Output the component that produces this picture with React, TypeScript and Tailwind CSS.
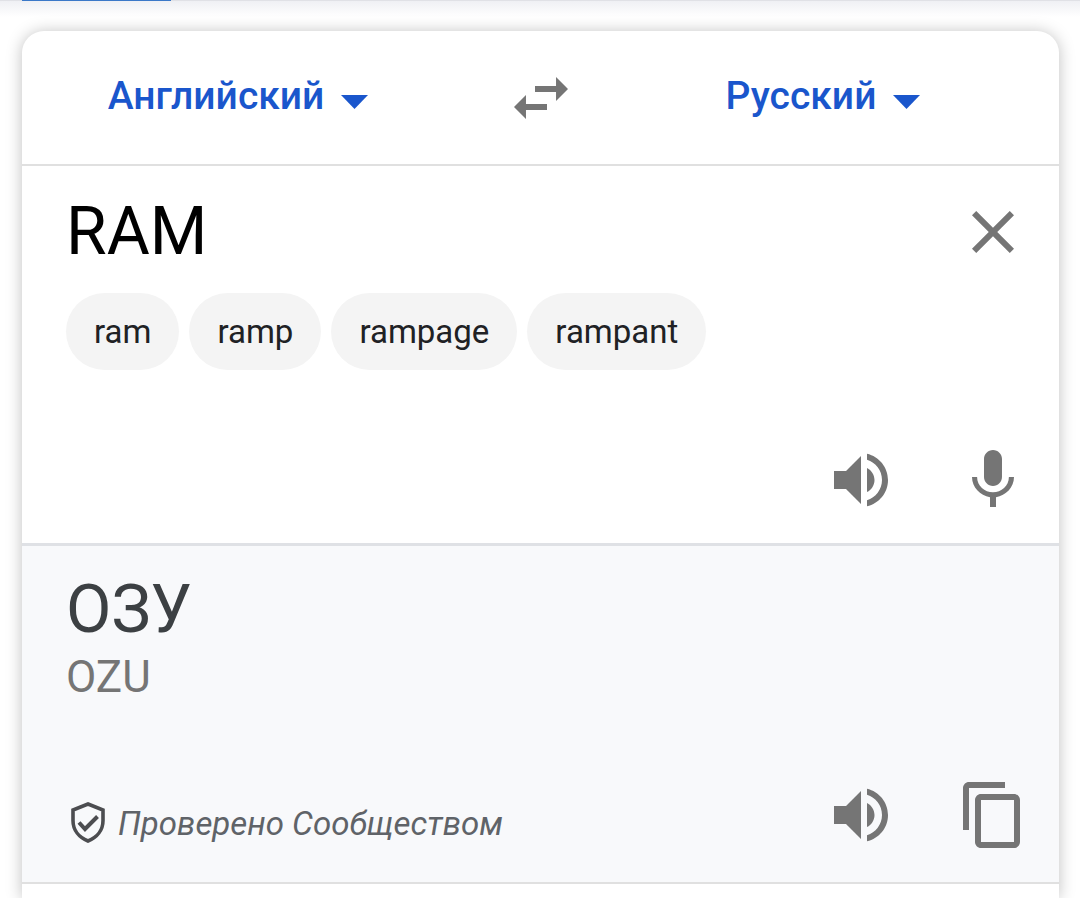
import React from 'react';

const SUGGESTIONS = ['ram', 'ramp', 'rampage', 'rampant'];

const ICONS = {
  swap: 'M6.99 11L3 15l3.99 4v-3H14v-2H6.99v-3zM21 9l-3.99-4v3H10v2h7.01v3L21 9z',
  close: 'M19 6.41L17.59 5 12 10.59 6.41 5 5 6.41 10.59 12 5 17.59 6.41 19 12 13.41 17.59 19 19 17.59 13.41 12z',
  speaker:
    'M3 9v6h4l5 5V4L7 9H3zm13.5 3c0-1.77-1.02-3.29-2.5-4.03v8.05c1.48-.73 2.5-2.25 2.5-4.02zM14 3.23v2.06c2.89.86 5 3.54 5 6.71s-2.11 5.85-5 6.71v2.06c4.01-.91 7-4.49 7-8.77s-2.99-7.86-7-8.77z',
  mic: 'M12 14c1.66 0 2.99-1.34 2.99-3L15 5c0-1.66-1.34-3-3-3S9 3.34 9 5v6c0 1.66 1.34 3 3 3zm5.3-3c0 3-2.54 5.1-5.3 5.1S6.7 14 6.7 11H5c0 3.41 2.72 6.23 6 6.72V21h2v-3.28c3.28-.48 6-3.3 6-6.72h-1.7z',
  copy: 'M16 1H4c-1.1 0-2 .9-2 2v14h2V3h12V1zm3 4H8c-1.1 0-2 .9-2 2v14c0 1.1.9 2 2 2h11c1.1 0 2-.9 2-2V7c0-1.1-.9-2-2-2zm0 16H8V7h11v14z',
};

function IconButton({ icon, label }: { icon: keyof typeof ICONS; label: string }) {
  return (
    <button type="button" aria-label={label} className="shrink-0 text-[#757575]">
      <svg viewBox="0 0 24 24" className="size-[72px]" fill="currentColor" aria-hidden="true">
        <path d={ICONS[icon]} />
      </svg>
    </button>
  );
}

function LanguageSelect({ label, value, options }: { label: string; value: string; options: string[] }) {
  return (
    <div className="flex flex-1 items-center justify-center pr-5 pb-1 text-[#1a56cc]">
      <select
        aria-label={label}
        defaultValue={value}
        className="h-16 appearance-none bg-transparent pr-2 text-[39px] leading-[52px] font-medium outline-none [field-sizing:content]"
      >
        {options.map((option) => (
          <option key={option}>{option}</option>
        ))}
      </select>
      <svg viewBox="0 0 27 14" className="mt-3 ml-[9px] h-[14px] w-[27px]" fill="currentColor" aria-hidden="true">
        <path d="M0 0h27L13.5 14z" />
      </svg>
    </div>
  );
}

export default function App() {
  return (
    <div className="flex min-h-screen flex-col overflow-hidden bg-white font-[Roboto,sans-serif]">
      {/* Bottom edge of the tab strip and its shadow */}
      <div className="h-px bg-[#e0e1e6] pl-[22px]">
        <div className="h-px w-[149px] bg-[#3b78c8]" />
      </div>
      <div className="h-4 bg-linear-to-b from-[#eff0f4] to-white" />

      <div className="mt-[14px] mr-[21px] ml-[22px] flex-1 rounded-t-[22px] bg-white shadow-[0_1px_16px_rgba(0,0,0,0.25)]">
        <header className="flex h-[135px] items-center border-b-2 border-[#e0e0e0]">
          <LanguageSelect label="Исходный язык" value="Английский" options={['Английский', 'Русский']} />
          <div className="flex w-[133px] justify-center">
            <IconButton icon="swap" label="Поменять языки" />
          </div>
          <LanguageSelect label="Язык перевода" value="Русский" options={['Русский', 'Английский']} />
        </header>

        <section className="border-b-3 border-[#dfe1e5] pt-[30px] pr-[30px] pb-[27px] pl-11">
          <div className="flex items-start">
            <input
              type="text"
              aria-label="Исходный текст"
              defaultValue="RAM"
              className="h-[70px] min-w-0 flex-1 text-[66px] text-black outline-none"
            />
            <IconButton icon="close" label="Очистить" />
          </div>
          <div className="mt-[25px] flex flex-wrap gap-[10px]">
            {SUGGESTIONS.map((word) => (
              <button
                key={word}
                type="button"
                className="h-[77px] rounded-full bg-[#f4f4f4] px-7 text-[33px] text-[#202124]"
              >
                {word}
              </button>
            ))}
          </div>
          <div className="mt-[74px] flex justify-end gap-[60px]">
            <IconButton icon="speaker" label="Прослушать" />
            <IconButton icon="mic" label="Голосовой ввод" />
          </div>
        </section>

        <section className="border-b-2 border-[#e0e0e0] bg-[#f8f9fb] pt-[23px] pr-[30px] pb-[31px] pl-11">
          <p className="text-[66px] leading-[82px] text-[#3c4043]">ОЗУ</p>
          <p className="text-[44px] leading-[52px] text-[#757575]">OZU</p>
          <div className="mt-[76px] flex items-center">
            <div className="flex flex-1 items-center gap-2 pt-[18px] text-[#5f6368]">
              <svg viewBox="0 0 44 44" className="size-11" fill="none" stroke="#4c4d50" aria-hidden="true">
                <path d="M22 2L37 8v10.500c0 9.500-6 17-15 20.500C13 35.500 7 28 7 18.500V8z" strokeWidth="3.600" />
                <path d="M13 20.500l6 6.500L31.500 14.500" strokeWidth="4" />
              </svg>
              <span className="text-[33px] leading-[44px] italic">Проверено Сообществом</span>
            </div>
            <div className="flex gap-[60px]">
              <IconButton icon="speaker" label="Прослушать перевод" />
              <IconButton icon="copy" label="Скопировать перевод" />
            </div>
          </div>
        </section>
      </div>
    </div>
  );
}
